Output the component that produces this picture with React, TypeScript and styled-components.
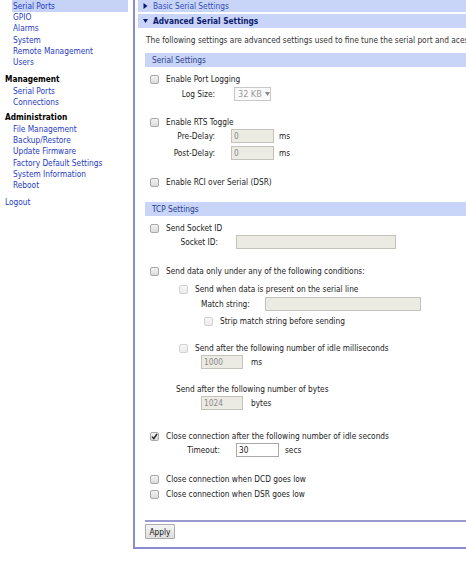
import React from "react";
import styled, { createGlobalStyle, css } from "styled-components";

const Global = createGlobalStyle`
  html, body { margin: 0; padding: 0; background: #fff; }
  body {
    font-family: "DejaVu Sans", Tahoma, Verdana, sans-serif;
    font-stretch: condensed;
    font-size: 8.25px;
    color: #222;
    overflow: hidden;
  }
  * { box-sizing: border-box; }
`;

const Page = styled.div`
  display: flex;
  width: 466px;
  height: 575px;
  align-items: flex-start;
`;

const Sidebar = styled.nav`
  width: 133px;
  flex: none;
  display: flex;
  flex-direction: column;
  padding-left: 5px;
  padding-right: 5px;
`;

const NavItem = styled.a<{ $active?: boolean }>`
  display: block;
  height: 11.3px;
  line-height: 11.3px;
  margin-left: 7px;
  padding-left: 1px;
  color: #1f3bc4;
  text-decoration: none;
  white-space: nowrap;
  ${(p) =>
    p.$active &&
    css`
      background: #c6d3f7;
      height: 12px;
      line-height: 12px;
    `}
`;

const NavHeading = styled.div<{ $top: number }>`
  margin-top: ${(p) => p.$top}px;
  height: 11.3px;
  line-height: 11.3px;
  font-weight: bold;
  color: #000;
`;

const LogoutLink = styled.a`
  display: block;
  margin-top: 5.6px;
  height: 11.3px;
  line-height: 11.3px;
  color: #1f3bc4;
  text-decoration: none;
`;

const Panel = styled.main`
  flex: 1;
  border-left: 2px solid #8b8bd0;
  border-bottom: 2px solid #8b8bd0;
  padding: 0 0 8px 3px;
  display: flex;
  flex-direction: column;
  min-width: 0;
`;

const Bar = styled.div<{ $top: number; $height: number }>`
  margin-top: ${(p) => p.$top}px;
  height: ${(p) => p.$height}px;
  background: #c8d4f8;
  display: flex;
  align-items: center;
  gap: 5px;
  padding-left: 5px;
  white-space: nowrap;
`;

const BarTitle = styled.span<{ $bold?: boolean }>`
  color: ${(p) => (p.$bold ? "#0c1a6e" : "#2f4fb5")};
  font-weight: ${(p) => (p.$bold ? "bold" : "normal")};
`;

const Arrow = styled.svg`
  width: 5px;
  height: 6px;
  flex: none;
`;

const Content = styled.div`
  padding-left: 7px;
  display: flex;
  flex-direction: column;
`;

const Description = styled.div`
  margin-top: 5px;
  height: 14px;
  line-height: 14px;
  white-space: nowrap;
  overflow: hidden;
  color: #333;
  padding-left: 1px;
`;

const SubBar = styled.div<{ $top: number }>`
  margin-top: ${(p) => p.$top}px;
  height: 14px;
  background: #c8d4f8;
  color: #2a3f8c;
  display: flex;
  align-items: center;
  padding-left: 7px;
`;

const Row = styled.div<{ $top: number; $indent: number }>`
  margin-top: ${(p) => p.$top}px;
  height: 14px;
  display: flex;
  align-items: center;
  padding-left: ${(p) => p.$indent}px;
  white-space: nowrap;
`;

const Box = styled.span<{ $checked?: boolean; $disabled?: boolean }>`
  width: 9px;
  height: 9px;
  flex: none;
  border: 1px solid ${(p) => (p.$disabled ? "#d2d2d2" : "#a8a8a8")};
  border-radius: 2px;
  background: ${(p) =>
    p.$disabled
      ? "linear-gradient(#f6f6f6, #ececec)"
      : "linear-gradient(#f2f2f2, #dcdcdc)"};
  margin-right: 7px;
  display: flex;
  align-items: center;
  justify-content: center;
`;

const Check = styled.svg`
  width: 7px;
  height: 7px;
`;

const Label = styled.span`
  color: #222;
`;

const FieldLabel = styled.span<{ $width: number }>`
  width: ${(p) => p.$width}px;
  text-align: right;
  flex: none;
  padding-right: 2px;
`;

const Input = styled.div<{ $width: number; $left: number; $enabled?: boolean }>`
  width: ${(p) => p.$width}px;
  height: 14px;
  margin-left: ${(p) => p.$left}px;
  border: 1px solid ${(p) => (p.$enabled ? "#a9a9a9" : "#c3c3bc")};
  background: ${(p) => (p.$enabled ? "#fff" : "#ebebe4")};
  color: ${(p) => (p.$enabled ? "#222" : "#8a8a8a")};
  padding-left: 2px;
  display: flex;
  align-items: center;
  flex: none;
`;

const Select = styled.div`
  width: 37px;
  height: 14px;
  margin-left: 17px;
  border: 1px solid #c8c8c8;
  background: #fafafa;
  color: #9a9a9a;
  padding-left: 3px;
  display: flex;
  align-items: center;
  gap: 3px;
  font-size: 9px;
`;

const Unit = styled.span<{ $left: number }>`
  margin-left: ${(p) => p.$left}px;
`;

const Separator = styled.div`
  margin-top: 19px;
  height: 2px;
  background: #9a9ad2;
`;

const Button = styled.button`
  margin-top: 2px;
  align-self: flex-start;
  height: 15px;
  width: 30px;
  padding: 0;
  font: inherit;
  color: #111;
  border: 1px solid #adadad;
  border-radius: 1px;
  background: linear-gradient(#f4f4f4, #dedede);
`;

const CheckBox = ({ checked, disabled }: { checked?: boolean; disabled?: boolean }) => (
  <Box $checked={checked} $disabled={disabled}>
    {checked && (
      <Check viewBox="0 0 7 7">
        <path d="M1 3.6 L2.8 5.6 L6 1" stroke="#222" strokeWidth="1.4" fill="none" />
      </Check>
    )}
  </Box>
);

export default function App() {
  return (
    <>
      <Global />
      <Page>
        <Sidebar>
          <NavItem $active>Serial Ports</NavItem>
          <NavItem>GPIO</NavItem>
          <NavItem>Alarms</NavItem>
          <NavItem>System</NavItem>
          <NavItem>Remote Management</NavItem>
          <NavItem>Users</NavItem>
          <NavHeading $top={6}>Management</NavHeading>
          <NavItem>Serial Ports</NavItem>
          <NavItem>Connections</NavItem>
          <NavHeading $top={4}>Administration</NavHeading>
          <NavItem>File Management</NavItem>
          <NavItem>Backup/Restore</NavItem>
          <NavItem>Update Firmware</NavItem>
          <NavItem>Factory Default Settings</NavItem>
          <NavItem>System Information</NavItem>
          <NavItem>Reboot</NavItem>
          <LogoutLink>Logout</LogoutLink>
        </Sidebar>
        <Panel>
          <Bar $top={0} $height={12}>
            <Arrow viewBox="0 0 5 6">
              <path d="M0.5 0 L4.5 3 L0.5 6 Z" fill="#0c1a6e" />
            </Arrow>
            <BarTitle>Basic Serial Settings</BarTitle>
          </Bar>
          <Bar $top={2} $height={14}>
            <Arrow viewBox="0 0 5 6">
              <path d="M0 1 L5 1 L2.5 5 Z" fill="#0c1a6e" />
            </Arrow>
            <BarTitle $bold>Advanced Serial Settings</BarTitle>
          </Bar>
          <Content>
            <Description>
              The following settings are advanced settings used to fine tune the serial port and acess
            </Description>
            <SubBar $top={6}>Serial Settings</SubBar>

            <Row $top={5} $indent={5}>
              <CheckBox />
              <Label>Enable Port Logging</Label>
            </Row>
            <Row $top={1} $indent={5}>
              <FieldLabel $width={67}>Log Size:</FieldLabel>
              <Select>
                32 KB
                <svg width="5" height="4" viewBox="0 0 5 4">
                  <path d="M0 0 L5 0 L2.5 4 Z" fill="#888" />
                </svg>
              </Select>
            </Row>

            <Row $top={14} $indent={5}>
              <CheckBox />
              <Label>Enable RTS Toggle</Label>
            </Row>
            <Row $top={0} $indent={5}>
              <FieldLabel $width={67}>Pre-Delay:</FieldLabel>
              <Input $width={43} $left={14}>0</Input>
              <Unit $left={5}>ms</Unit>
            </Row>
            <Row $top={3} $indent={5}>
              <FieldLabel $width={67}>Post-Delay:</FieldLabel>
              <Input $width={43} $left={14}>0</Input>
              <Unit $left={5}>ms</Unit>
            </Row>

            <Row $top={15} $indent={5}>
              <CheckBox />
              <Label>Enable RCI over Serial (DSR)</Label>
            </Row>

            <SubBar $top={13}>TCP Settings</SubBar>

            <Row $top={5} $indent={5}>
              <CheckBox />
              <Label>Send Socket ID</Label>
            </Row>
            <Row $top={0} $indent={5}>
              <FieldLabel $width={70}>Socket ID:</FieldLabel>
              <Input $width={160} $left={16} />
            </Row>

            <Row $top={15} $indent={5}>
              <CheckBox />
              <Label>Send data only under any of the following conditions:</Label>
            </Row>
            <Row $top={4} $indent={34}>
              <CheckBox disabled />
              <Label>Send when data is present on the serial line</Label>
            </Row>
            <Row $top={1} $indent={56}>
              <Label>Match string:</Label>
              <Input $width={156} $left={15} />
            </Row>
            <Row $top={3} $indent={59}>
              <CheckBox disabled />
              <Label>Strip match string before sending</Label>
            </Row>

            <Row $top={13} $indent={34}>
              <CheckBox disabled />
              <Label>Send after the following number of idle milliseconds</Label>
            </Row>
            <Row $top={0} $indent={56}>
              <Input $width={42} $left={0}>1000</Input>
              <Unit $left={8}>ms</Unit>
            </Row>

            <Row $top={13} $indent={31}>
              <Label>Send after the following number of bytes</Label>
            </Row>
            <Row $top={0} $indent={56}>
              <Input $width={42} $left={0}>1024</Input>
              <Unit $left={8}>bytes</Unit>
            </Row>

            <Row $top={19} $indent={5}>
              <CheckBox checked />
              <Label>Close connection after the following number of idle seconds</Label>
            </Row>
            <Row $top={0} $indent={5}>
              <FieldLabel $width={72}>Timeout:</FieldLabel>
              <Input $width={43} $left={14} $enabled>30</Input>
              <Unit $left={6}>secs</Unit>
            </Row>

            <Row $top={15} $indent={5}>
              <CheckBox />
              <Label>Close connection when DCD goes low</Label>
            </Row>
            <Row $top={1} $indent={5}>
              <CheckBox />
              <Label>Close connection when DSR goes low</Label>
            </Row>

            <Separator />
            <Button>Apply</Button>
          </Content>
        </Panel>
      </Page>
    </>
  );
}
